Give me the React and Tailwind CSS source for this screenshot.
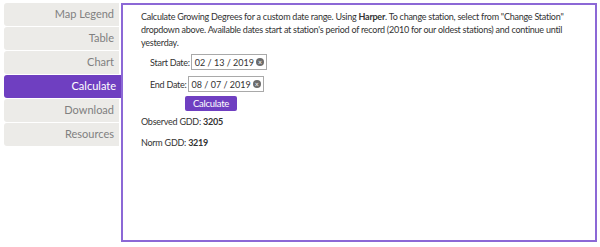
import React from "react";

const tabs = ["Map Legend", "Table", "Chart", "Calculate", "Download", "Resources"];

function DateInput({ value }) {
  return (
    <div className="flex h-[16px] w-[76px] items-center border border-[#a9a9a9] bg-white pl-[3px] pr-[2px] text-[9px] tracking-normal text-[#333]">
      <span className="flex-1 whitespace-nowrap">{value}</span>
      <span className="ml-[2px] flex h-[8px] w-[8px] shrink-0 items-center justify-center rounded-full bg-[#6b6b6b] text-[7px] leading-none text-white">×</span>
    </div>
  );
}

export default function App() {
  return (
    <div className="flex h-[247px] w-[600px] bg-white pl-[4px] pt-[3px] font-['Lato',sans-serif] text-[#333]">
      <div className="flex w-[117px] flex-col gap-[1px]">
        {tabs.map((t) => (
          <div
            key={t}
            className={
              t === "Calculate"
                ? "flex h-[23px] items-center justify-end rounded-l-[3px] bg-[#6f3fc1] pr-[5px] text-[11px] text-white"
                : "flex h-[23px] w-[115px] items-center justify-end rounded-l-[3px] bg-[#ecebe8] pr-[5px] text-[11px] text-[#808080]"
            }
          >
            {t}
          </div>
        ))}
      </div>
      <div className="h-[239px] w-[476px] border-2 border-[#8c68d6] pl-[18px] pr-[4px] pt-[5px] text-[9px] leading-[13px] tracking-[-0.25px] text-[#333]">
        <p className="whitespace-nowrap">
          Calculate Growing Degrees for a custom date range. Using <b>Harper</b>. To change station, select from "Change Station"
          <br />
          dropdown above. Available dates start at station's period of record (2010 for our oldest stations) and continue until
          <br />
          yesterday.
        </p>
        <div className="mt-[5px] flex items-center pl-[9px]">
          <span className="mr-[1px]">Start Date:</span>
          <DateInput value="02 / 13 / 2019" />
        </div>
        <div className="mt-[6px] flex items-center pl-[9px]">
          <span className="mr-[1px]">End Date:</span>
          <DateInput value="08 / 07 / 2019" />
        </div>
        <div className="mt-[4px] pl-[44px]">
          <button className="block h-[15px] w-[52px] rounded-[2px] bg-[#6f3fc1] text-center text-[9.5px] leading-[15px] text-white">Calculate</button>
        </div>
        <p className="mt-[4px]">Observed GDD: <b>3205</b></p>
        <p className="mt-[8px]">Norm GDD: <b>3219</b></p>
      </div>
    </div>
  );
}
